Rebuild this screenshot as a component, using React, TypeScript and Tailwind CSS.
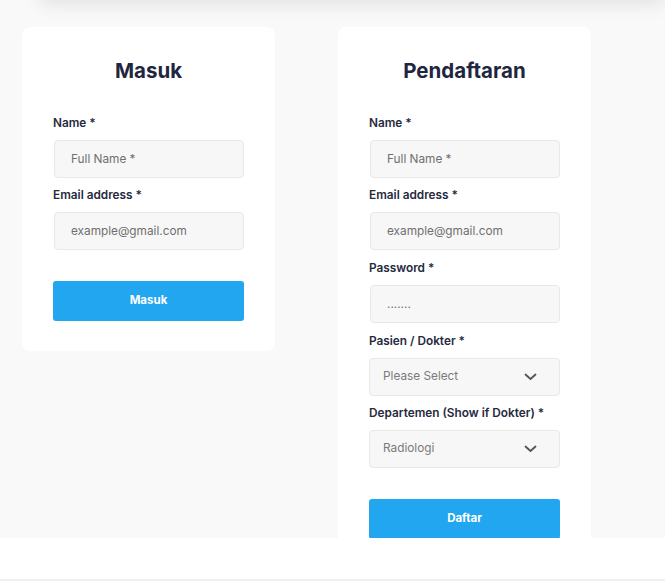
import { ChevronDown } from "lucide-react"

const font = { fontFamily: "Inter, 'Open Sans', sans-serif" }

function Label({ children }: { children: React.ReactNode }) {
  return <label className="mb-[9px] block h-4 text-[11.8px] font-semibold leading-4 text-[#252a3e]">{children}</label>
}

function Field({ label, placeholder, gap = "mb-[9px]" }: { label: string; placeholder: string; gap?: string }) {
  return (
    <div className={gap}>
      <Label>{label}</Label>
      <input
        className="ml-px h-[38px] w-[190px] rounded-[4px] border border-[#e8e8e8] bg-[#f7f7f7] px-4 text-[11.8px] text-[#555] outline-none placeholder:text-[#6f6f6f]"
        placeholder={placeholder}
      />
    </div>
  )
}

function Select({ label, value, gap = "mb-[9px]" }: { label: string; value: string; gap?: string }) {
  return (
    <div className={gap}>
      <Label>{label}</Label>
      <div className="flex h-[38px] w-[191px] items-center justify-between rounded-[4px] border border-[#e8e8e8] bg-[#f7f7f7] pl-[13px] pr-[22px] text-[11.8px] text-[#7a7a7a]">
        <span>{value}</span>
        <svg width="13" height="8" viewBox="0 0 13 8" fill="none" stroke="#555" strokeWidth="1.8" strokeLinecap="round" strokeLinejoin="round">
          <polyline points="1.5,1.5 6.5,6 11.5,1.5" />
        </svg>
      </div>
    </div>
  )
}

function Card({ title, children, button }: { title: string; children: React.ReactNode; button: string }) {
  return (
    <div className="w-[253px] shrink-0 self-start rounded-[8px] bg-white px-[31px] pb-[30px] pt-[30px]">
      <h2 className="mb-[30px] text-center text-[20.5px] font-bold leading-7 text-[#1f2640]">{title}</h2>
      {children}
      <button className="mt-[22px] h-10 w-[191px] rounded-[3px] bg-[#22a6f0] text-[11.5px] font-bold text-white">{button}</button>
    </div>
  )
}

export default function App() {
  return (
    <div className="min-h-[581px] bg-white" style={font}>
      <div className="relative h-[538px] overflow-hidden bg-[#f9f9f9]">
        <div className="absolute -top-5 left-10 right-0 h-5 bg-white shadow-[0_0_22px_rgba(0,0,0,0.14)]" />
        <div className="flex gap-[63px] pl-[22px] pt-[27px]">
          <Card title="Masuk" button="Masuk">
            <Field label="Name *" placeholder="Full Name *" />
            <Field label="Email address *" placeholder="example@gmail.com" />
          </Card>
          <Card title="Pendaftaran" button="Daftar">
            <Field label="Name *" placeholder="Full Name *" />
            <Field label="Email address *" placeholder="example@gmail.com" gap="mb-[10px]" />
            <Field label="Password *" placeholder="......." gap="mb-[10px]" />
            <Select label="Pasien / Dokter *" value="Please Select" />
            <Select label="Departemen (Show if Dokter) *" value="Radiologi" />
          </Card>
        </div>
      </div>
      <div className="h-[41px] bg-white" />
      <div className="h-[2px] bg-[#f0f0f0]" />
    </div>
  )
}
